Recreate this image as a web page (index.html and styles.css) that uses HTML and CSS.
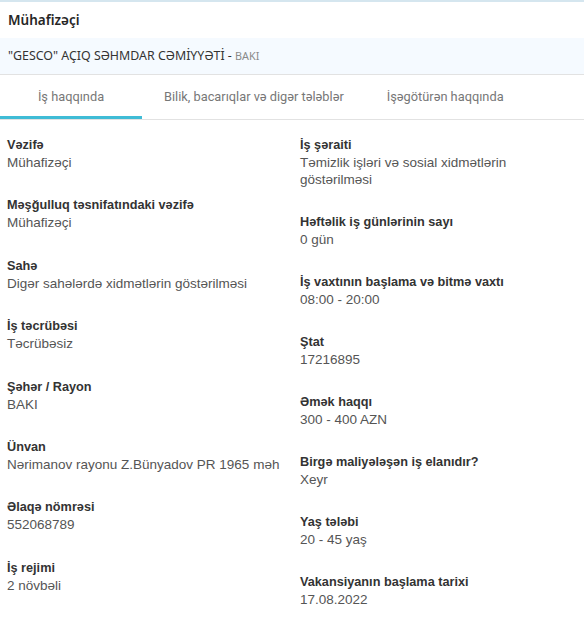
FILE: index.html
```html
<!DOCTYPE html>
<html lang="az">
<head>
<meta charset="UTF-8">
<meta name="viewport" content="width=device-width, initial-scale=1.0">
<title>Mühafizəçi</title>
<link rel="stylesheet" href="styles.css">
</head>
<body>
<div class="card">
    <div class="title">Mühafizəçi</div>
    <div class="company">"GESCO" AÇIQ SƏHMDAR CƏMİYYƏTİ - <span class="city">BAKI</span></div>

    <div class="tabs">
        <div class="tab tab-first active">İş haqqında</div>
        <div class="tab">Bilik, bacarıqlar və digər tələblər</div>
        <div class="tab">İşəgötürən haqqında</div>
    </div>

    <div class="details">
        <div class="col">
            <div class="item">
                <div class="label">Vəzifə</div>
                <div class="value">Mühafizəçi</div>
            </div>
            <div class="item">
                <div class="label">Məşğulluq təsnifatındaki vəzifə</div>
                <div class="value">Mühafizəçi</div>
            </div>
            <div class="item">
                <div class="label">Sahə</div>
                <div class="value">Digər sahələrdə xidmətlərin göstərilməsi</div>
            </div>
            <div class="item">
                <div class="label">İş təcrübəsi</div>
                <div class="value">Təcrübəsiz</div>
            </div>
            <div class="item">
                <div class="label">Şəhər / Rayon</div>
                <div class="value">BAKI</div>
            </div>
            <div class="item">
                <div class="label">Ünvan</div>
                <div class="value">Nərimanov rayonu Z.Bünyadov PR 1965 məh</div>
            </div>
            <div class="item">
                <div class="label">Əlaqə nömrəsi</div>
                <div class="value">552068789</div>
            </div>
            <div class="item">
                <div class="label">İş rejimi</div>
                <div class="value">2 növbəli</div>
            </div>
        </div>

        <div class="col col-right">
            <div class="item">
                <div class="label">İş şəraiti</div>
                <div class="value">Təmizlik işləri və sosial xidmətlərin<br>göstərilməsi</div>
            </div>
            <div class="item item-tall">
                <div class="label">Həftəlik iş günlərinin sayı</div>
                <div class="value">0 gün</div>
            </div>
            <div class="item">
                <div class="label">İş vaxtının başlama və bitmə vaxtı</div>
                <div class="value">08:00 - 20:00</div>
            </div>
            <div class="item">
                <div class="label">Ştat</div>
                <div class="value">17216895</div>
            </div>
            <div class="item">
                <div class="label">Əmək haqqı</div>
                <div class="value">300 - 400 AZN</div>
            </div>
            <div class="item">
                <div class="label">Birgə maliyələşən iş elanıdır?</div>
                <div class="value">Xeyr</div>
            </div>
            <div class="item">
                <div class="label">Yaş tələbi</div>
                <div class="value">20 - 45 yaş</div>
            </div>
            <div class="item">
                <div class="label">Vakansiyanın başlama tarixi</div>
                <div class="value">17.08.2022</div>
            </div>
        </div>
    </div>
</div>
</body>
</html>
```

FILE: styles.css
```css
body {
    margin: 0;
    padding: 0;
    background-color: #fff;
    font-family: "Liberation Sans", Arial, sans-serif;
}

.card {
    width: 584px;
    border-top: 2px solid #d5e6ef;
}

.title {
    height: 36px;
    line-height: 36px;
    padding: 0 8px;
    font-family: "Noto Sans", "Open Sans", sans-serif;
    font-size: 13.5px;
    font-weight: 600;
    color: #262626;
}

.company {
    height: 36px;
    line-height: 36px;
    padding: 0 8px;
    background-color: #f5faff;
    border-bottom: 1px solid #e2e2e2;
    font-family: "Noto Sans", "Open Sans", sans-serif;
    font-size: 12.4px;
    color: #333;
}

.city {
    font-size: 10.8px;
    color: #8a8a8a;
}

.tabs {
    display: flex;
    height: 44px;
    border-bottom: 1px solid #e2e2e2;
}

.tab {
    box-sizing: border-box;
    height: 44px;
    line-height: 44px;
    padding: 0 21px 0 22px;
    font-family: Roboto, sans-serif;
    font-size: 12.8px;
    color: #777;
}

.tab-first {
    width: 142px;
    padding: 0;
    text-align: center;
}

.tab.active {
    border-bottom: 3px solid #3fbcd6;
}

.details {
    display: grid;
    grid-template-columns: 293px 291px;
    padding-top: 16px;
}

.col {
    padding-left: 7px;
}

.item {
    margin-bottom: 25.4px;
}

.col-right .item {
    margin-bottom: 25px;
}

.col-right .item-tall {
    margin-top: 1px;
}

.label {
    height: 18px;
    line-height: 18px;
    font-size: 12.7px;
    font-weight: bold;
    color: #333;
}

.value {
    line-height: 17px;
    font-size: 13.5px;
    color: #555;
}
```
